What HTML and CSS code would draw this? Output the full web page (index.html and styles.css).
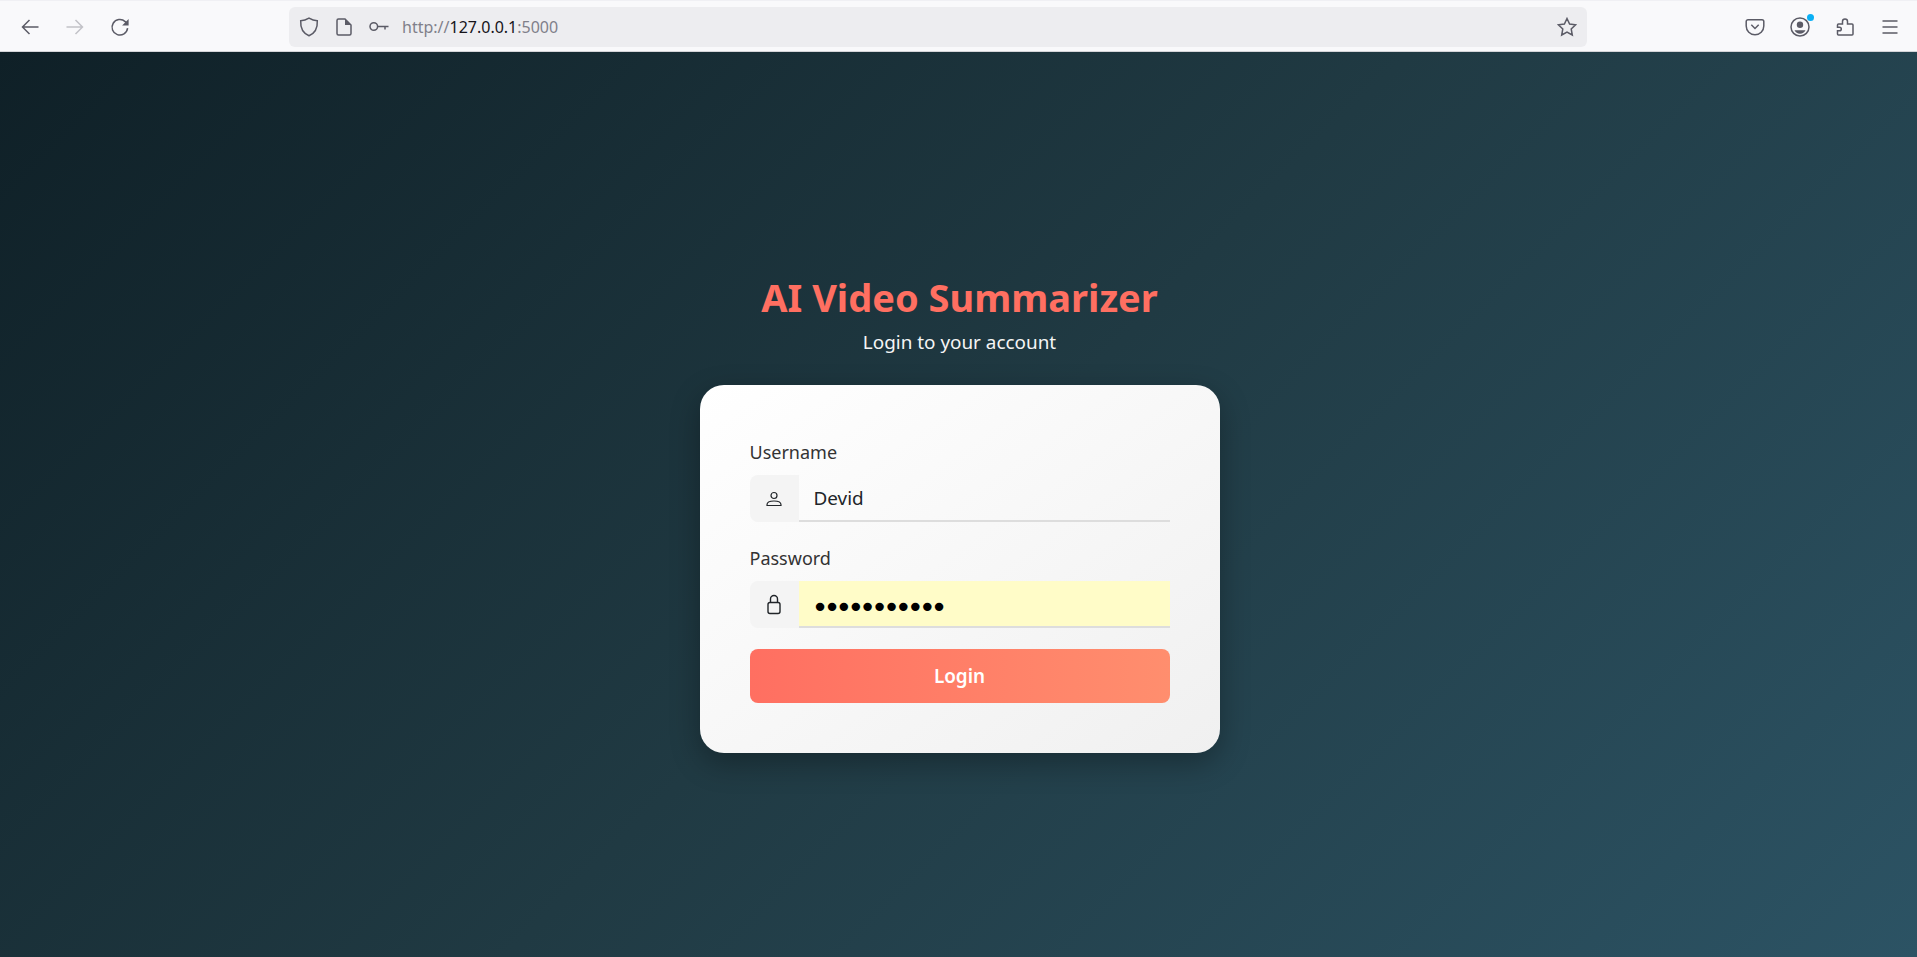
FILE: index.html
```html
<!DOCTYPE html>
<html lang="en">
<head>
    <meta charset="UTF-8">
    <title>AI Video Summarizer</title>
    <link rel="stylesheet" href="styles.css">
</head>
<body>
<div class="toolbar">
    <div class="nav">
        <svg class="tool" viewBox="0 0 20 20"><path d="M18.500 10H2.500M9.500 3 2.500 10l7 7"/></svg>
        <svg class="tool dim" viewBox="0 0 20 20"><path d="M1.500 10h16M10.500 3l7 7-7 7"/></svg>
        <svg class="tool" viewBox="0 0 20 20"><path d="M17.600 11.200A7.800 7.800 0 1 1 15.200 4.600L17.500 6.800"/><path class="solid" d="M18.600 2v6.500h-6.500z"/></svg>
    </div>
    <div class="urlbar">
        <svg class="tool" viewBox="0 0 20 20"><path d="M10 1.200c2.800 1.700 5.400 2.500 8.300 2.600.4 7.300-2.200 12.400-8.300 15-6.100-2.600-8.700-7.700-8.300-15C4.600 3.700 7.200 2.900 10 1.200z"/></svg>
        <svg class="tool" viewBox="0 0 20 20"><path d="M3 3.500A1.500 1.500 0 0 1 4.500 2H11l6 6v8.500a1.500 1.500 0 0 1-1.500 1.500h-11A1.500 1.500 0 0 1 3 16.500z"/><path class="solid" d="M11 2l6 6h-6z"/></svg>
        <svg class="tool" viewBox="0 0 20 20"><circle cx="4.800" cy="9.500" r="3.800"/><path d="M8.600 9.500h10.900M16 9.500v3"/></svg>
        <div class="url"><span>http://</span>127.0.0.1<span>:5000</span></div>
        <svg class="tool" viewBox="0 0 20 20"><path d="m10 1.500 2.600 5.500 6 .8-4.400 4.200 1.100 6-5.300-2.900-5.300 2.900 1.100-6L1.400 7.800l6-.8z"/></svg>
    </div>
    <div class="actions">
        <svg class="tool" viewBox="0 0 20 20"><path d="M3 2.800h14A1.800 1.800 0 0 1 18.800 4.600V9a8.800 8.800 0 0 1-17.600 0V4.600A1.800 1.800 0 0 1 3 2.800z"/><path d="m6.300 7.800 3.700 3.700 3.700-3.700"/></svg>
        <div class="account">
            <svg class="tool" viewBox="0 0 20 20"><circle cx="10" cy="10" r="9"/><circle class="solid" cx="10" cy="7.800" r="3.200"/><path class="solid" d="M4.500 13.300h11A6.500 6.500 0 0 1 10 16.800a6.500 6.500 0 0 1-5.500-3.500z"/></svg>
            <span class="badge"></span>
        </div>
        <svg class="tool" viewBox="0 0 20 20"><path d="M10 2a2.500 2.500 0 0 1 2.500 2.500V7H17a1 1 0 0 1 1 1v9a1 1 0 0 1-1 1H3.500a1 1 0 0 1-1-1v-3.200h2a1.800 1.800 0 0 0 0-3.600h-2V8a1 1 0 0 1 1-1h4V4.500A2.500 2.500 0 0 1 10 2z"/></svg>
        <svg class="tool" viewBox="0 0 20 20"><path d="M2.500 4h15M2.500 10h15M2.500 16h15"/></svg>
    </div>
</div>

<div class="page">
    <h1 class="title">AI Video Summarizer</h1>
    <p class="subtitle">Login to your account</p>
    <form class="card">
        <label class="label" for="username">Username</label>
        <div class="group">
            <span class="addon">
                <svg class="field-icon" viewBox="0 0 16 16"><circle cx="8" cy="4.500" r="3"/><path d="M1 14.500v-.8c0-2.200 2.500-3.700 7-3.700s7 1.500 7 3.700v.8z"/></svg>
            </span>
            <input class="field" id="username" type="text" value="Devid">
        </div>
        <label class="label" for="password">Password</label>
        <div class="group">
            <span class="addon">
                <svg class="field-icon tall" viewBox="0 0 16 20"><rect x="2" y="8" width="12" height="11" rx="2"/><path d="M4.500 8V4.500a3.500 3.500 0 0 1 7 0V8"/></svg>
            </span>
            <input class="field filled" id="password" type="password" value="12345678901">
        </div>
        <button class="login" type="button">Login</button>
    </form>
</div>
</body>
</html>
```

FILE: styles.css
```css
* {
    box-sizing: border-box;
    margin: 0;
    padding: 0;
}

html, body {
    height: 100%;
}

body {
    display: flex;
    flex-direction: column;
    font-family: "Noto Sans", "Open Sans", sans-serif;
    overflow: hidden;
}

/* browser bar */
.toolbar {
    height: 52px;
    flex: none;
    display: flex;
    align-items: center;
    padding: 1px 0 0 20px;
    background: #f9f9fb;
    border-top: 1px solid #f0f0f4;
    border-bottom: 1px solid #d4d4d8;
}

.tool {
    width: 20px;
    height: 20px;
    flex: none;
    display: block;
    fill: none;
    stroke: #5b5b66;
    stroke-width: 1.5;
}

.tool .solid {
    fill: #5b5b66;
    stroke: none;
}

.tool.dim {
    stroke: #c2c2c7;
}

.nav {
    display: flex;
    gap: 25px;
}

.urlbar {
    width: 1298px;
    height: 40px;
    margin-left: 159px;
    padding: 0 10px;
    display: flex;
    align-items: center;
    gap: 15px;
    background: #ededf0;
    border-radius: 6px;
}

.url {
    flex: 1;
    margin-left: -2px;
    font-size: 16px;
    color: #15141a;
}

.url span {
    color: #80808a;
}

.actions {
    display: flex;
    align-items: center;
    gap: 25px;
    margin-left: 158px;
}

.account {
    position: relative;
    height: 20px;
}

.badge {
    position: absolute;
    top: -3px;
    right: -4px;
    width: 7px;
    height: 7px;
    border-radius: 50%;
    background: #0bb0f5;
}

/* login page */
.page {
    flex: 1;
    display: flex;
    flex-direction: column;
    align-items: center;
    padding: 220px 0 0 2px;
    background: linear-gradient(135deg, #0f2027, #203a43, #2c5364);
}

.title {
    font-size: 38px;
    line-height: 50px;
    font-weight: 700;
    color: #ff6f61;
}

.subtitle {
    margin-top: 7px;
    font-size: 18.9px;
    line-height: 26px;
    color: #f5f5f5;
}

.card {
    width: 520px;
    height: 368px;
    margin-top: 30px;
    padding: 54px 50px 0;
    background: linear-gradient(145deg, #ffffff, #f0f0f0);
    border-radius: 24px;
    box-shadow: 0 10px 30px rgba(0, 0, 0, 0.3);
}

.label {
    display: block;
    height: 26px;
    margin-bottom: 10px;
    font-size: 18px;
    line-height: 26px;
    color: #333;
}

.group {
    display: flex;
    height: 47px;
    margin-bottom: 23px;
}

.addon {
    width: 49px;
    flex: none;
    display: flex;
    align-items: center;
    justify-content: center;
    background: #f4f4f4;
    border-radius: 8px 0 0 8px;
}

.field-icon {
    width: 16px;
    height: 16px;
    fill: none;
    stroke: #212529;
    stroke-width: 1.2;
}

.field-icon.tall {
    height: 21px;
    stroke-width: 1.4;
}

.field {
    flex: 1;
    min-width: 0;
    padding: 0 15px;
    font-family: inherit;
    font-size: 18.9px;
    color: #212529;
    background: transparent;
    border: 0;
    border-bottom: 2px solid #ddd;
    outline: none;
}

.field.filled {
    padding-top: 7px;
    padding-left: 13px;
    font-family: "DejaVu Sans", sans-serif;
    font-size: 29px;
    letter-spacing: -5.2px;
    background: #fffcc8;
    color: #000;
}

.login {
    display: block;
    width: 100%;
    height: 54px;
    margin-top: -2px;
    font-family: inherit;
    font-size: 18.9px;
    font-weight: 600;
    color: #fff;
    background: linear-gradient(90deg, #ff6f61, #ff8e6e);
    border: 0;
    border-radius: 8px;
}
```
